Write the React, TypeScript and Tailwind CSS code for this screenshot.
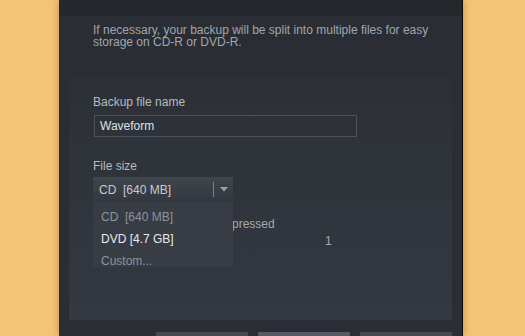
import React from 'react';

const font = { fontFamily: '"Liberation Sans", Arial, sans-serif' };

const sizes = [
  { label: 'CD  [640 MB]', active: false },
  { label: 'DVD [4.7 GB]', active: true },
  { label: 'Custom...', active: false },
];

function SizeDropdown() {
  return (
    <div className="relative w-[140px]">
      <div className="flex h-[25px] items-center bg-gradient-to-b from-[#40444c] to-[#33373e] pl-[6px] text-[12px] text-[#c6cad0]">
        <span className="flex-1 whitespace-pre">CD  [640 MB]</span>
        <span className="h-[15px] w-px bg-[#7d838c]" />
        <span className="flex w-[19px] justify-center">
          <svg width="8" height="5" viewBox="0 0 8 5">
            <path d="M0 0h8L4 4.5z" fill="#9aa0a8" />
          </svg>
        </span>
      </div>
      <ul className="absolute left-0 top-[25px] z-10 h-[65px] w-[140px] bg-[#383c44] pl-[8px] pt-[4px] text-[12px]">
        {sizes.map((s) => (
          <li
            key={s.label}
            className={`flex h-[22px] items-center whitespace-pre ${s.active ? 'text-[#e8eaec]' : 'text-[#8d939b]'}`}
          >
            {s.label}
          </li>
        ))}
      </ul>
    </div>
  );
}

export default function App() {
  return (
    <div className="flex h-[336px] w-[525px] overflow-hidden bg-[#f5c577]" style={font}>
      <div className="ml-[59px] flex h-full w-[404px] flex-col border-r border-[#0c0d0f] bg-[#2a2d33] shadow-[0_0_8px_rgba(120,70,0,0.45)]">
        <div className="h-[16px] shrink-0 bg-[#24272c]" />
        <p className="pl-[34px] pr-[10px] pt-[8px] text-[12px] leading-[12px] text-[#a0a6ae]">
          If necessary, your backup will be split into multiple files for easy storage on CD-R or DVD-R.
        </p>
        <div className="mx-[10px] mt-[27px] h-[245px] shrink-0 bg-gradient-to-b from-[#2c3036] to-[#343841] pl-[24px] pt-[20px]">
          <div className="text-[12px] leading-[14px] text-[#b6bbc2]">Backup file name</div>
          <div className="ml-px mt-[6px] flex h-[22px] w-[263px] items-center border border-[#4c5160] pl-[5px] text-[12px] text-[#dfe2e6]">
            Waveform
          </div>
          <div className="mt-[22px] text-[12px] leading-[14px] text-[#b6bbc2]">File size</div>
          <div className="relative mt-[4px] flex">
            <SizeDropdown />
            <span className="absolute left-[73px] top-[38px] text-[12px] text-[#a3a8b0]">Backup compressed</span>
            <span className="absolute left-[232px] top-[55px] text-[12px] text-[#a3a8b0]">1</span>
          </div>
        </div>
        <div className="mr-[10px] mt-[12px] flex justify-end gap-[10px]">
          <div className="h-[20px] w-[92px] bg-[#444954]" />
          <div className="h-[20px] w-[92px] bg-[#545b67]" />
          <div className="h-[20px] w-[92px] bg-[#444954]" />
        </div>
      </div>
    </div>
  );
}
